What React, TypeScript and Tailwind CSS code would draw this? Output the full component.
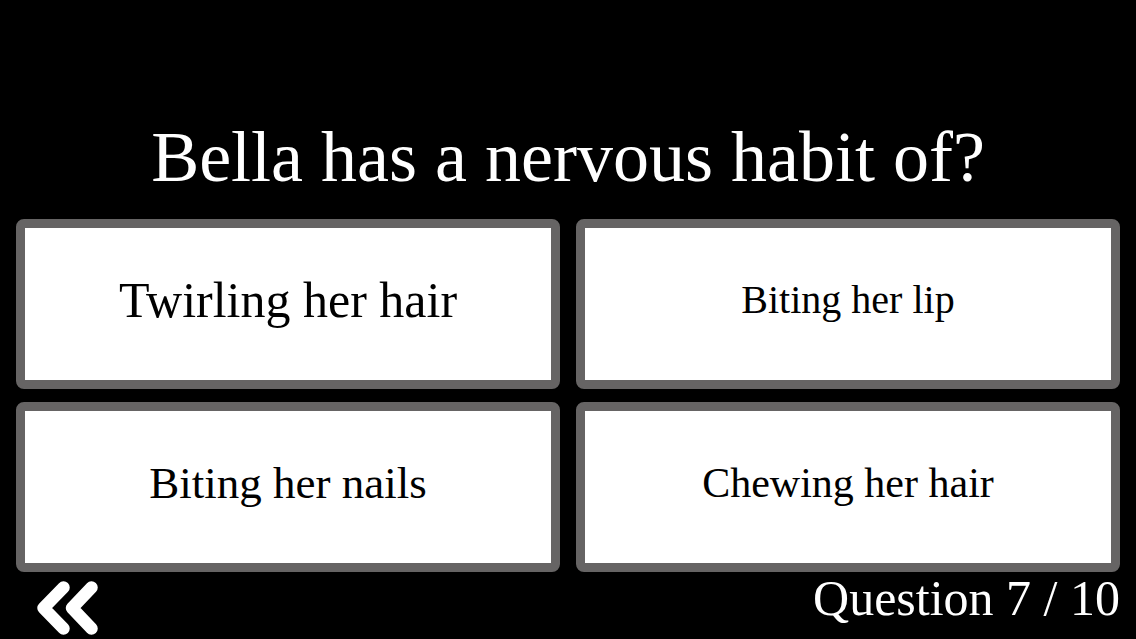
import React from 'react';

const answers = [
  { text: 'Twirling her hair', size: 'text-[50px]' },
  { text: 'Biting her lip', size: 'text-[40px]' },
  { text: 'Biting her nails', size: 'text-[45px]' },
  { text: 'Chewing her hair', size: 'text-[42px]' },
];

const BackIcon: React.FC = () => (
  <svg
    width="61"
    height="54"
    viewBox="0 0 61 54"
    fill="none"
    stroke="currentColor"
    strokeWidth="12.5"
    strokeLinecap="round"
    strokeLinejoin="round"
    aria-hidden="true"
  >
    <path d="M26.5 6.5 L6.5 27 L26.5 47.5" />
    <path d="M54.5 6.5 L35 27 L54.5 47.5" />
  </svg>
);

const App: React.FC = () => {
  return (
    <main className="min-h-screen bg-black px-4 font-['Liberation_Serif',serif] text-white">
      <h1 className="pt-[117px] pb-[22px] text-center text-[72px] leading-[80px]">
        Bella has a nervous habit of?
      </h1>

      <div className="grid grid-cols-2 gap-x-4 gap-y-[13px]">
        {answers.map((answer) => (
          <button
            key={answer.text}
            type="button"
            className={`flex min-h-[170px] items-center justify-center rounded-lg border-[9px] border-[#666464] bg-white pb-2 leading-none text-black ${answer.size}`}
          >
            {answer.text}
          </button>
        ))}
      </div>

      <footer className="flex items-start justify-between">
        <button type="button" aria-label="Back" className="pt-[9px] pl-[21px]">
          <BackIcon />
        </button>
        <p className="pt-[2px] text-[50px] leading-[48px]">Question 7 / 10</p>
      </footer>
    </main>
  );
};

export default App;
